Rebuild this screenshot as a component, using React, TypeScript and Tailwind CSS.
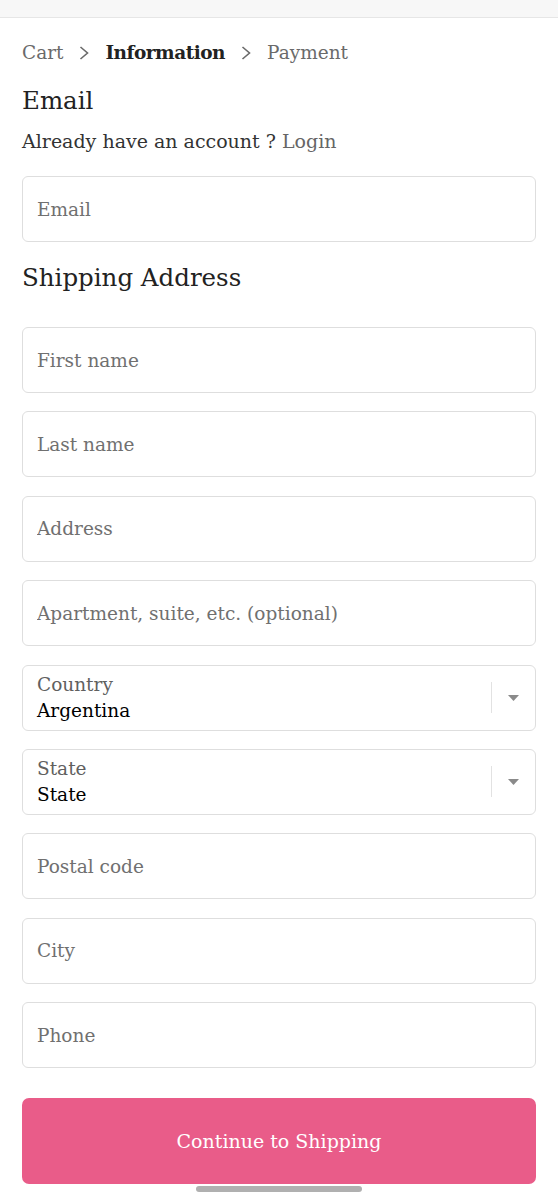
import React from 'react'

const FONT = { fontFamily: '"DejaVu Serif", "Liberation Serif", serif' }

const FIELDS_TOP = ['First name', 'Last name', 'Address', 'Apartment, suite, etc. (optional)']
const FIELDS_BOTTOM = ['Postal code', 'City', 'Phone']

function TextField({ placeholder }: { placeholder: string }) {
  return (
    <input
      type="text"
      placeholder={placeholder}
      className="block w-full h-[66px] rounded-[6px] border border-[#dedede] bg-white px-[14px] text-[18.5px] text-[#222] placeholder:text-[#707070] outline-none"
      style={FONT}
    />
  )
}

function SelectField({ label, value }: { label: string; value: string }) {
  return (
    <div className="flex h-[66px] w-full items-center rounded-[6px] border border-[#dedede] bg-white">
      <div className="flex flex-1 flex-col pl-[14px] pt-[1px]">
        <span className="text-[18.5px] leading-[26px] text-[#606060]">{label}</span>
        <span className="text-[18.5px] leading-[26px] text-black">{value}</span>
      </div>
      <div className="h-[31px] w-px bg-[#e2e2e2]" />
      <div className="flex w-[43px] items-center justify-center">
        <svg width="11" height="6" viewBox="0 0 11 6">
          <path d="M0 0h11L5.5 6z" fill="#8a8a8a" />
        </svg>
      </div>
    </div>
  )
}

function Chevron() {
  return (
    <svg width="10" height="16" viewBox="0 0 10 16" className="mx-[16px] mt-[1px]">
      <path d="M1.5 2l7 6-7 6" fill="none" stroke="#6a6a6a" strokeWidth="1.6" />
    </svg>
  )
}

export default function App() {
  return (
    <div className="relative min-h-[1200px] bg-white" style={FONT}>
      <div className="h-[18px] border-b border-[#e6e6e6] bg-[#f7f7f7]" />
      <div className="px-[22px]">
        <nav className="flex h-[68px] items-center pt-[1px] text-[18.5px] text-[#6a6a6a]">
          <span>Cart</span>
          <Chevron />
          <span className="font-bold tracking-[-0.5px] text-[#222]">Information</span>
          <Chevron />
          <span>Payment</span>
        </nav>
        <h2 className="text-[24.5px] leading-[30px] text-[#222]">Email</h2>
        <p className="mt-[12px] text-[19px] leading-[26px] text-[#333]">
          Already have an account ? <span className="text-[#666]">Login</span>
        </p>
        <div className="mt-[22px]">
          <TextField placeholder="Email" />
        </div>
        <h2 className="mt-[21px] text-[24.5px] leading-[30px] text-[#222]">Shipping Address</h2>
        <div className="mt-[34px] flex flex-col gap-[18.4px]">
          {FIELDS_TOP.map(f => (
            <TextField key={f} placeholder={f} />
          ))}
          <SelectField label="Country" value="Argentina" />
          <SelectField label="State" value="State" />
          {FIELDS_BOTTOM.map(f => (
            <TextField key={f} placeholder={f} />
          ))}
        </div>
        <button
          className="mt-[30px] flex h-[86px] w-full items-center justify-center rounded-[7px] bg-[#e95c89] text-[19px] text-white"
          style={FONT}
        >
          Continue to Shipping
        </button>
      </div>
      <div className="absolute left-[196px] top-[1186px] h-[6px] w-[166px] rounded-full bg-[#b0b0b0]" />
    </div>
  )
}
